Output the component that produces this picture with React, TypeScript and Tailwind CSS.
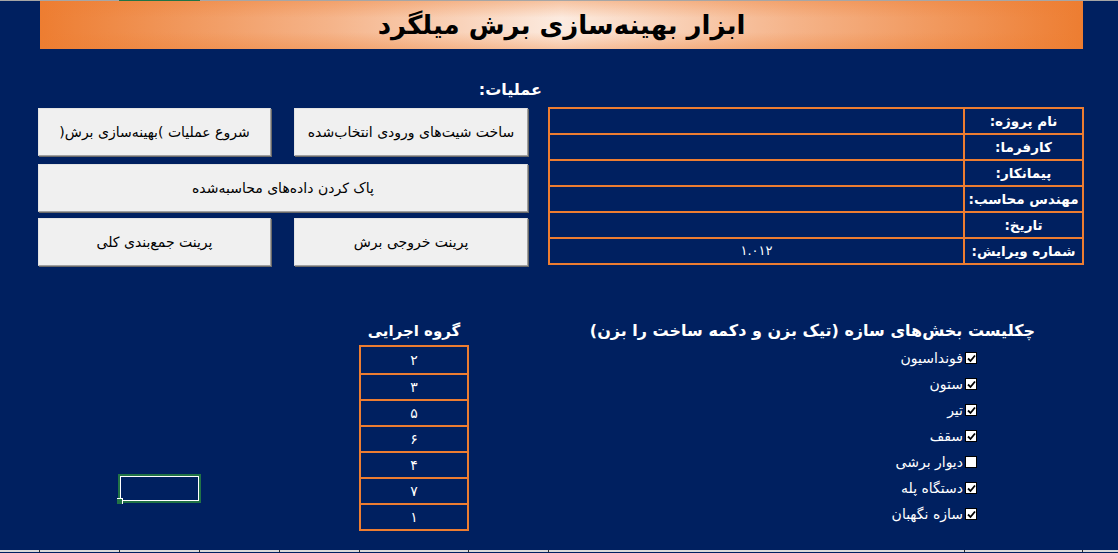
import React from 'react';

const fa = "font-['DejaVu_Sans','Noto_Sans',sans-serif]";

const infoRows = [
  { label: 'نام پروژه:', value: '' },
  { label: 'کارفرما:', value: '' },
  { label: 'پیمانکار:', value: '' },
  { label: 'مهندس محاسب:', value: '' },
  { label: 'تاریخ:', value: '' },
  { label: 'شماره ویرایش:', value: '۱.۰۱۲' },
];

const groups = ['۲', '۳', '۵', '۶', '۴', '۷', '۱'];

const parts = [
  { name: 'فونداسیون', checked: true },
  { name: 'ستون', checked: true },
  { name: 'تیر', checked: true },
  { name: 'سقف', checked: true },
  { name: 'دیوار برشی', checked: false },
  { name: 'دستگاه پله', checked: true },
  { name: 'سازه نگهبان', checked: true },
];

// column edges of the sheet, for the little ticks along the bottom
const colWidths = [39, 80, 80, 80, 80, 109, 80, 416, 118, 36];

function SheetButton({ label, className = '' }: { label: string; className?: string }) {
  return (
    <div
      dir="rtl"
      className={`h-[48px] flex items-center justify-center bg-[#f0f0f0] border border-[#e3e3e3] border-r-[#a0a0a0] border-b-[#a0a0a0] shadow-[1px_1px_0_#696969] text-black text-[14px] ${className}`}
    >
      {label}
    </div>
  );
}

function CheckBox({ checked }: { checked: boolean }) {
  return (
    <div className="w-[12px] h-[12px] bg-white border border-black flex items-center justify-center shrink-0">
      {checked && (
        <svg width="9" height="9" viewBox="0 0 9 9">
          <path d="M1 4.5 L3.5 7 L8 1.5" stroke="black" strokeWidth="1.8" fill="none" />
        </svg>
      )}
    </div>
  );
}

export default function App() {
  return (
    <div className={`w-[1118px] h-[553px] bg-[#002060] flex flex-col overflow-hidden ${fa}`}>
      {/* top edge of the grid with the selected column */}
      <div className="h-px flex shrink-0">
        <div className="w-[119px] bg-[#a6a6a6]" />
        <div className="w-[81px] bg-[#217346]" />
        <div className="flex-1 bg-[#a6a6a6]" />
      </div>

      {/* title banner */}
      <div className="ml-[40px] w-[1043px] h-[48px] shrink-0 relative bg-[linear-gradient(90deg,#ed7d31_0%,#f5b48a_28%,#fcebe0_50%,#f5b48a_72%,#ed7d31_100%)]">
        <div className="absolute inset-0 bg-[linear-gradient(180deg,rgba(237,125,49,0.35)_0%,rgba(237,125,49,0)_35%,rgba(237,125,49,0)_65%,rgba(237,125,49,0.35)_100%)]" />
        <div dir="rtl" className="relative h-full flex items-center justify-center text-black font-bold text-[26px]">
          ابزار بهینه‌سازی برش میلگرد
        </div>
      </div>

      {/* operations + project info */}
      <div className="flex items-start shrink-0">
        <div className="ml-[38px] w-[490px] flex flex-col">
          <div dir="rtl" className="mt-[31px] h-[20px] -mr-[14px] text-white font-bold text-[16px] leading-[20px]">
            عملیات:
          </div>
          <div className="mt-[8px] flex gap-[23px]">
            <SheetButton className="w-[233px]" label="شروع عملیات )بهینه‌سازی برش(" />
            <SheetButton className="w-[234px]" label="ساخت شیت‌های ورودی انتخاب‌شده" />
          </div>
          <SheetButton className="mt-[8px] w-[490px]" label="پاک کردن داده‌های محاسبه‌شده" />
          <div className="mt-[6px] flex gap-[23px]">
            <SheetButton className="w-[233px]" label="پرینت جمع‌بندی کلی" />
            <SheetButton className="w-[234px]" label="پرینت خروجی برش" />
          </div>
        </div>

        <table dir="rtl" className="ml-[20px] mt-[58px] w-[536px] border-collapse border-2 border-[#ed7d31]">
          <tbody>
            {infoRows.map((row) => (
              <tr key={row.label} className="h-[26px]">
                <td className="w-[119px] border-2 border-[#ed7d31] text-center text-white font-bold text-[13.5px] p-0">
                  {row.label}
                </td>
                <td className="border-2 border-[#ed7d31] text-center text-white text-[13px] p-0">{row.value}</td>
              </tr>
            ))}
          </tbody>
        </table>
      </div>

      {/* lower area */}
      <div className="flex items-start mt-[54px] shrink-0">
        {/* selected cell */}
        <div className="w-[359px] shrink-0">
          <div className="ml-[118px] mt-[154px] w-[83px] h-[29px] border-2 border-[#217346] relative">
            <div className="w-full h-full border border-white" />
            <div className="absolute -left-[3px] -bottom-[3px] w-[6px] h-[6px] bg-[#217346] border-t border-r border-white" />
          </div>
        </div>

        {/* executive groups */}
        <div className="w-[110px] shrink-0 flex flex-col">
          <div dir="rtl" className="h-[25px] text-center text-white font-bold text-[15px] leading-[22px]">
            گروه اجرایی
          </div>
          <div className="border-2 border-[#ed7d31] flex flex-col">
            {groups.map((g, i) => (
              <div
                key={i}
                className={`h-[26px] flex items-center justify-center text-white text-[14px] ${i > 0 ? 'border-t-2 border-[#ed7d31]' : ''}`}
              >
                {g}
              </div>
            ))}
          </div>
        </div>

        {/* checklist */}
        <div className="flex-1 flex flex-col items-end pr-[83px]">
          <div dir="rtl" className="h-[25px] text-white font-bold text-[16px] leading-[22px] whitespace-nowrap">
            چکلیست بخش‌های سازه (تیک بزن و دکمه ساخت را بزن)
          </div>
          <div className="mr-[58px] flex flex-col">
            {parts.map((p) => (
              <div key={p.name} dir="rtl" className="h-[26px] flex items-center gap-[2px] text-white text-[14px]">
                <CheckBox checked={p.checked} />
                <span>{p.name}</span>
              </div>
            ))}
          </div>
        </div>
      </div>

      {/* bottom edge of the grid */}
      <div className="mt-auto mb-px h-[2px] flex shrink-0 bg-[#d9d9d9]">
        {colWidths.map((w, i) => (
          <div
            key={i}
            style={{ width: w }}
            className={`h-full shrink-0 ${i > 0 ? 'border-l border-[#2b2b2b]' : ''}`}
          />
        ))}
      </div>
    </div>
  );
}
